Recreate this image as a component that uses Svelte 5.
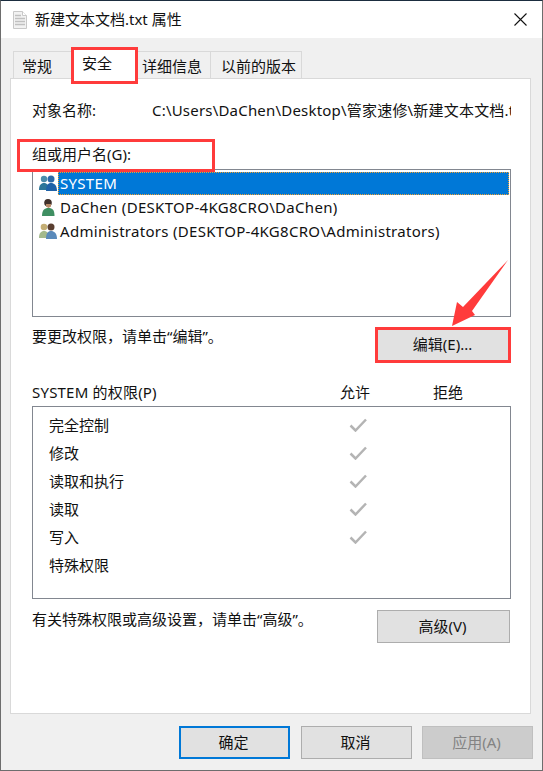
<script>
    const users = [
        { name: "SYSTEM", kind: "system" },
        { name: "DaChen (DESKTOP-4KG8CRO\\DaChen)", kind: "user" },
        { name: "Administrators (DESKTOP-4KG8CRO\\Administrators)", kind: "admin" },
    ];
    const perms = [
        { name: "完全控制", allow: true },
        { name: "修改", allow: true },
        { name: "读取和执行", allow: true },
        { name: "读取", allow: true },
        { name: "写入", allow: true },
        { name: "特殊权限", allow: false },
    ];
</script>

<div class="window">
    <header class="titlebar">
        <svg class="file-icon" width="14" height="18" viewBox="0 0 14 18">
            <path d="M.5.5h9l4 4v13H.5z" fill="#f2f2f2" stroke="#c8c8c8" />
            <path d="M9.500.5v4h4" fill="#fff" stroke="#c8c8c8" />
            <path d="M2 4.500h6M2 7.500h10M2 10.500h10M2 13.500h10" stroke="#c0c0c0" stroke-width="1.500" />
        </svg>
        <span class="title">新建文本文档.txt 属性</span>
        <svg class="close" width="13" height="13" viewBox="0 0 13 13">
            <path d="M.5.5l12 12M12.500.5l-12 12" stroke="#111" stroke-width="1.100" />
        </svg>
    </header>

    <div class="body">
        <nav class="tabs">
            <span class="tab general">常规</span>
            <span class="tab active">安全</span>
            <span class="tab details">详细信息</span>
            <span class="tab previous">以前的版本</span>
        </nav>

        <section class="panel">
            <div class="object-row">
                <span class="object-label">对象名称:</span>
                <span class="object-path">C:\Users\DaChen\Desktop\管家速修\新建文本文档.txt</span>
            </div>

            <div class="group-label">组或用户名(G):</div>
            <ul class="user-list">
                {#each users as user, i}
                    <li class="user-row">
                        <svg class="user-icon" width="18" height="18" viewBox="0 0 18 18">
                            {#if user.kind === "system"}
                                <circle cx="5" cy="5" r="3.200" fill="#4a8cab" />
                                <path d="M0 16c0-5 2-7 5-7s5 2 5 7z" fill="#2c7699" />
                                <circle cx="12" cy="5" r="3.500" fill="#2a68a8" />
                                <path d="M7 17c0-6 2-8 5-8s6 2 6 8z" fill="#1f62a8" />
                            {:else if user.kind === "user"}
                                <circle cx="9" cy="4.800" r="3.800" fill="#40302a" />
                                <path d="M7 6h5v2.500L9.500 10 7 8.500z" fill="#b98a68" />
                                <path d="M3 18c0-6 2.500-8 6.500-8s6 2 6 8z" fill="#3f8f62" />
                            {:else}
                                <circle cx="5" cy="5" r="3.300" fill="#c4ae74" />
                                <path d="M0 16c0-5 2-7 5-7s5 2 5 7z" fill="#a3b98c" />
                                <circle cx="12" cy="5" r="3.500" fill="#5a3f30" />
                                <path d="M7 17c0-6 2-8 5-8s6 2 6 8z" fill="#5a8aba" />
                            {/if}
                        </svg>
                        <span class="user-name" class:selected={i === 0}>{user.name}</span>
                    </li>
                {/each}
            </ul>

            <div class="action-row">
                <span class="hint">要更改权限&#xFF0C;请单击“编辑”。</span>
                <button class="btn">编辑(E)...</button>
            </div>

            <div class="perm-head">
                <span class="perm-title">SYSTEM 的权限(P)</span>
                <span>允许</span>
                <span>拒绝</span>
            </div>
            <ul class="perm-list">
                {#each perms as perm}
                    <li class="perm-row">
                        <span class="perm-name">{perm.name}</span>
                        {#if perm.allow}
                            <svg width="18" height="14" viewBox="0 0 18 14">
                                <path d="M1.500 7.500l5 5L17 1.500" fill="none" stroke="#b4b4b4" stroke-width="2.500" />
                            </svg>
                        {/if}
                    </li>
                {/each}
            </ul>

            <div class="action-row advanced">
                <span class="hint">有关特殊权限或高级设置&#xFF0C;请单击“高级”。</span>
                <button class="btn">高级(V)</button>
            </div>
        </section>

        <footer class="footer">
            <button class="btn wide primary">确定</button>
            <button class="btn wide">取消</button>
            <button class="btn wide disabled">应用(A)</button>
        </footer>
    </div>

    <!-- red annotations drawn on top of the screenshot -->
    <div class="mark mark-tab"></div>
    <div class="mark mark-group"></div>
    <div class="mark mark-edit"></div>
    <svg class="arrow" width="60" height="70" viewBox="0 0 60 70">
        <path d="M57 1L21 52l3 4L1 67l5-24 6 5z" fill="#ff3b3b" />
    </svg>
</div>

<style>
    :global(body) {
        margin: 0;
        background: #f0f0f0;
    }
    .window {
        position: relative;
        width: 543px;
        height: 771px;
        box-sizing: border-box;
        border: 1px solid #6d6d6d;
        border-top-color: #1b2d3f;
        font-family: "Noto Sans", "Noto Sans CJK SC", sans-serif;
        font-size: 15px;
        line-height: 20px;
        color: #111;
        background: #f0f0f0;
        overflow: hidden;
    }
    .titlebar {
        display: flex;
        align-items: center;
        height: 37px;
        padding: 0 15px 0 12px;
        background: #fff;
    }
    .file-icon {
        margin-right: 8px;
    }
    .title {
        flex: 1;
        margin-top: -1px;
    }
    .body {
        padding: 13px 11px 0 9px;
    }
    .tabs {
        display: flex;
        align-items: flex-end;
        height: 27px;
        padding-left: 3px;
    }
    .tab {
        box-sizing: border-box;
        height: 27px;
        padding-top: 4px;
        border: 1px solid #d9d9d9;
        border-bottom: 0;
        white-space: nowrap;
    }
    .general {
        width: 59px;
        padding-left: 8px;
    }
    .active {
        width: 65px;
        height: 31px;
        padding: 5px 0 0 10px;
        margin-bottom: -1px;
        background: #fff;
        border: 0;
        position: relative;
    }
    .details {
        width: 74px;
        padding-left: 4px;
    }
    .previous {
        width: 92px;
        margin-left: -1px;
        padding-left: 10px;
    }
    .panel {
        box-sizing: border-box;
        height: 636px;
        padding: 21px 19px 0 21px;
        background: #fff;
        border: 1px solid #d9d9d9;
    }
    .object-row {
        display: flex;
        white-space: nowrap;
        overflow: hidden;
        width: 479px;
    }
    .object-label {
        width: 120px;
        flex: none;
    }
    .object-path {
        letter-spacing: 0.2px;
    }
    .group-label {
        margin-top: 24px;
        height: 25px;
    }
    .user-list {
        list-style: none;
        box-sizing: border-box;
        height: 148px;
        margin: 0;
        padding: 1px 1px 0 0;
        border: 1px solid #828790;
    }
    .user-row {
        display: flex;
        align-items: center;
        height: 24px;
    }
    .user-icon {
        flex: none;
        margin: -1px 1px 0 6px;
    }
    .user-name {
        line-height: 23px;
        padding: 0 2px;
        letter-spacing: 0.3px;
    }
    .user-name.selected {
        flex: 1;
        background: #0078d7;
        color: #fff;
        outline: 1px dotted #f0a030;
        outline-offset: -1px;
    }
    .action-row {
        display: flex;
        justify-content: space-between;
        align-items: flex-start;
        padding-right: 1px;
        margin-top: 10px;
    }
    .action-row .btn {
        margin-top: 1px;
    }
    .hint {
        margin-top: -1px;
    }
    .btn {
        box-sizing: border-box;
        width: 133px;
        height: 33px;
        padding: 0 2px 2px 0;
        border: 1px solid #adadad;
        background: #e1e1e1;
        color: #111;
        font: inherit;
    }
    .perm-head {
        display: grid;
        grid-template-columns: 308px 93px 1fr;
        margin-top: 21px;
        height: 24px;
    }
    .perm-title {
        letter-spacing: 0.2px;
    }
    .perm-list {
        list-style: none;
        box-sizing: border-box;
        height: 193px;
        margin: 0;
        padding: 4px 0 0 16px;
        border: 1px solid #828790;
    }
    .perm-row {
        display: flex;
        align-items: center;
        height: 28px;
    }
    .perm-name {
        width: 300px;
    }
    .advanced {
        margin-top: 11px;
    }
    .advanced .btn {
        margin-top: 0;
    }
    .footer {
        display: flex;
        justify-content: flex-end;
        gap: 10px;
        margin: 12px -2px 0 0;
    }
    .wide {
        width: 111px;
    }
    .primary {
        margin-right: 1px;
        border: 2px solid #0078d7;
    }
    .disabled {
        background: #ccc;
        border-color: #bfbfbf;
        color: #838383;
    }
    .mark {
        position: absolute;
        box-sizing: border-box;
        border: 3px solid #ff3b3b;
    }
    .mark-tab {
        left: 70px;
        top: 46px;
        width: 67px;
        height: 37px;
    }
    .mark-group {
        left: 16px;
        top: 138px;
        width: 198px;
        height: 33px;
    }
    .mark-edit {
        left: 374px;
        top: 326px;
        width: 136px;
        height: 36px;
    }
    .arrow {
        position: absolute;
        left: 450px;
        top: 258px;
    }
</style>
